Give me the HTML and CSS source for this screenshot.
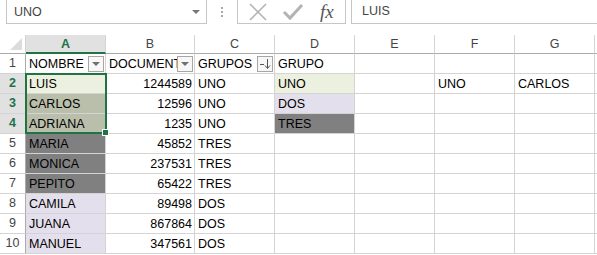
FILE: index.html
```html
<!DOCTYPE html>
<html lang="es">
<head>
    <meta charset="UTF-8">
    <title>Hoja1</title>
    <link rel="stylesheet" href="styles.css">
</head>
<body>
    <div class="formula-row">
        <div class="name-box">
            <span>UNO</span>
            <span class="drop"></span>
        </div>
        <div class="dots"><i></i><i></i><i></i></div>
        <div class="fx-buttons">
            <svg width="20" height="20" viewBox="0 0 20 20"><path d="M2 2 L18 18 M18 2 L2 18" stroke="#b3b3b3" stroke-width="1.6" fill="none"/></svg>
            <svg width="22" height="20" viewBox="0 0 22 20"><path d="M2 10 L8 16 L20 3" stroke="#b3b3b3" stroke-width="3" fill="none"/></svg>
            <span class="fx">fx</span>
        </div>
        <div class="formula-input">LUIS</div>
    </div>

    <div class="sheet">
        <div class="grid">
            <div class="corner"><span class="tri"></span></div>
            <div class="colhead sel">A</div>
            <div class="colhead">B</div>
            <div class="colhead">C</div>
            <div class="colhead">D</div>
            <div class="colhead">E</div>
            <div class="colhead">F</div>
            <div class="colhead">G</div>
            <div class="colhead"></div>

            <div class="rowhead">1</div>
            <div class="cell head">NOMBRE<span class="filter"></span></div>
            <div class="cell head">DOCUMENTO<span class="filter"></span></div>
            <div class="cell head">GRUPOS<span class="filter sort">
                <svg width="14" height="14" viewBox="0 0 14 14"><path d="M2 7.5 H6 M9.5 2 V11 M7 8.5 L9.5 11.5 L12 8.5" stroke="#555" stroke-width="1" fill="none"/></svg>
            </span></div>
            <div class="cell">GRUPO</div>
            <div class="cell"></div><div class="cell"></div><div class="cell"></div><div class="cell"></div>

            <div class="rowhead sel">2</div>
            <div class="cell green">LUIS</div>
            <div class="cell num">1244589</div>
            <div class="cell">UNO</div>
            <div class="cell green">UNO</div>
            <div class="cell"></div>
            <div class="cell">UNO</div>
            <div class="cell">CARLOS</div>
            <div class="cell"></div>

            <div class="rowhead sel">3</div>
            <div class="cell tint">CARLOS</div>
            <div class="cell num">12596</div>
            <div class="cell">UNO</div>
            <div class="cell lilac">DOS</div>
            <div class="cell"></div><div class="cell"></div><div class="cell"></div><div class="cell"></div>

            <div class="rowhead sel">4</div>
            <div class="cell tint">ADRIANA</div>
            <div class="cell num">1235</div>
            <div class="cell">UNO</div>
            <div class="cell gray">TRES</div>
            <div class="cell"></div><div class="cell"></div><div class="cell"></div><div class="cell"></div>

            <div class="rowhead">5</div>
            <div class="cell gray">MARIA</div>
            <div class="cell num">45852</div>
            <div class="cell">TRES</div>
            <div class="cell"></div><div class="cell"></div><div class="cell"></div><div class="cell"></div><div class="cell"></div>

            <div class="rowhead">6</div>
            <div class="cell gray">MONICA</div>
            <div class="cell num">237531</div>
            <div class="cell">TRES</div>
            <div class="cell"></div><div class="cell"></div><div class="cell"></div><div class="cell"></div><div class="cell"></div>

            <div class="rowhead">7</div>
            <div class="cell gray">PEPITO</div>
            <div class="cell num">65422</div>
            <div class="cell">TRES</div>
            <div class="cell"></div><div class="cell"></div><div class="cell"></div><div class="cell"></div><div class="cell"></div>

            <div class="rowhead">8</div>
            <div class="cell lilac">CAMILA</div>
            <div class="cell num">89498</div>
            <div class="cell">DOS</div>
            <div class="cell"></div><div class="cell"></div><div class="cell"></div><div class="cell"></div><div class="cell"></div>

            <div class="rowhead">9</div>
            <div class="cell lilac">JUANA</div>
            <div class="cell num">867864</div>
            <div class="cell">DOS</div>
            <div class="cell"></div><div class="cell"></div><div class="cell"></div><div class="cell"></div><div class="cell"></div>

            <div class="rowhead">10</div>
            <div class="cell lilac">MANUEL</div>
            <div class="cell num">347561</div>
            <div class="cell">DOS</div>
            <div class="cell"></div><div class="cell"></div><div class="cell"></div><div class="cell"></div><div class="cell"></div>
        </div>
        <div class="selection"><span class="handle"></span></div>
    </div>
</body>
</html>
```

FILE: styles.css
```css
body {
    margin: 0;
    font-family: "Liberation Sans", Arial, sans-serif;
    background: #fff;
    overflow: hidden;
}

/* formula bar */
.formula-row {
    display: flex;
    height: 24px;
    margin-bottom: 11px;
}
.name-box {
    margin-left: 6px;
    width: 201px;
    box-sizing: border-box;
    border: 1px solid #c6c6c6;
    border-top: none;
    display: flex;
    align-items: center;
    justify-content: space-between;
    padding: 0 6px 0 7px;
    font-size: 12.5px;
    color: #444;
}
.drop {
    width: 0;
    height: 0;
    border-left: 4px solid transparent;
    border-right: 4px solid transparent;
    border-top: 4px solid #777;
}
.dots {
    width: 30px;
    display: flex;
    flex-direction: column;
    align-items: center;
    justify-content: center;
    gap: 2px;
}
.dots i {
    width: 2px;
    height: 2px;
    background: #a8a8a8;
}
.fx-buttons {
    width: 109px;
    box-sizing: border-box;
    border: 1px solid #c6c6c6;
    border-top: none;
    display: flex;
    align-items: center;
    gap: 14px;
    padding-left: 10px;
}
.fx {
    font-family: "Liberation Serif", serif;
    font-style: italic;
    font-size: 19px;
    color: #555;
    margin-left: 2px;
}
.formula-input {
    flex: 1;
    margin-left: 5px;
    border: 1px solid #c6c6c6;
    border-top: none;
    border-right: none;
    font-size: 12.5px;
    color: #444;
    padding-left: 10px;
    line-height: 23px;
}

/* sheet */
.sheet {
    position: relative;
}
.grid {
    display: grid;
    grid-template-columns: 26px 80px 89px 80px 80px 80px 80px 80px 20px;
    grid-auto-rows: 20px;
    grid-template-rows: 19px;
    font-size: 12.5px;
}
.corner, .colhead, .rowhead, .cell {
    box-sizing: border-box;
    border-right: 1px solid #d4d4d4;
    border-bottom: 1px solid #d4d4d4;
    overflow: hidden;
    white-space: nowrap;
}
.corner {
    position: relative;
    border-bottom-color: #ababab;
}
.tri {
    position: absolute;
    right: 3px;
    bottom: 3px;
    width: 0;
    height: 0;
    border-left: 12px solid transparent;
    border-bottom: 12px solid #dcdcdc;
}
.colhead {
    text-align: center;
    color: #444;
    line-height: 18px;
    border-bottom-color: #ababab;
}
.colhead.sel {
    background: #e1e1e1;
    color: #217346;
    border-bottom: 2px solid #217346;
    font-weight: bold;
}
.rowhead {
    text-align: center;
    color: #444;
    line-height: 19px;
    border-right-color: #ababab;
}
.rowhead.sel {
    background: #e1e1e1;
    color: #217346;
    font-weight: bold;
}
.cell {
    padding: 0 2px 0 3px;
    line-height: 20px;
    color: #000;
    position: relative;
}
.cell.num {
    text-align: right;
}
.cell.green { background: #ebf1de; }
.cell.lilac { background: #e4dfec; }
.cell.gray  { background: #808080; }
.cell.tint  { background: #babfab; }
.cell.head {
    overflow: visible;
}

/* autofilter buttons */
.filter {
    position: absolute;
    right: 1px;
    top: 2px;
    width: 16px;
    height: 16px;
    box-sizing: border-box;
    border: 1px solid #a6a6a6;
    background: #f7f7f7;
}
.filter::after {
    content: "";
    position: absolute;
    left: 3px;
    top: 5px;
    border-left: 4px solid transparent;
    border-right: 4px solid transparent;
    border-top: 4px solid #707070;
}
.filter.sort::after {
    display: none;
}
.filter svg {
    display: block;
    margin: 0;
}

/* selected range A2:A4 */
.selection {
    position: absolute;
    left: 25px;
    top: 38px;
    width: 82px;
    height: 61px;
    box-sizing: border-box;
    border: 2px solid #217346;
    pointer-events: none;
}
.handle {
    position: absolute;
    right: -4px;
    bottom: -4px;
    width: 5px;
    height: 5px;
    background: #217346;
    border: 1px solid #fff;
}
```
